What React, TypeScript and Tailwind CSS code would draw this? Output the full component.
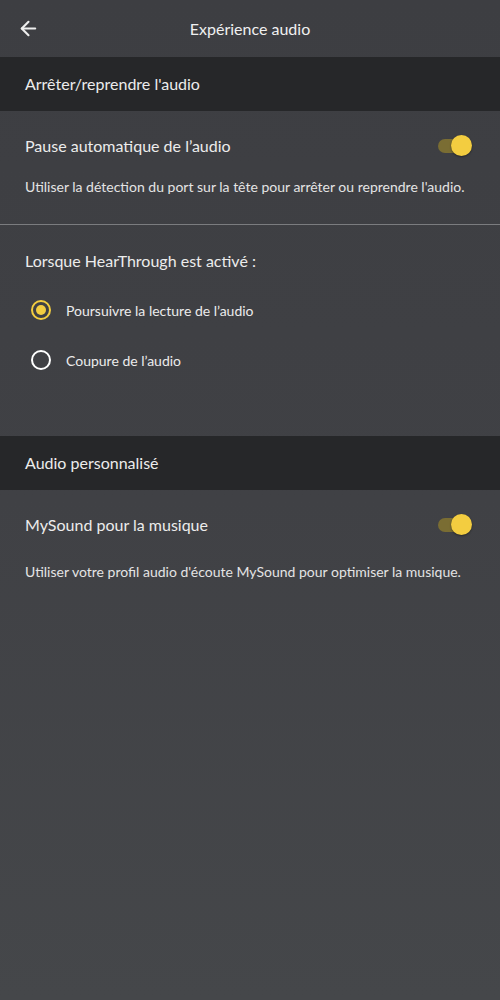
import { ArrowLeft } from 'lucide-react';

function Toggle() {
  return (
    <div className="relative w-[34px] h-[22px] flex items-center shrink-0">
      <div className="w-[32px] h-[14px] rounded-full bg-[#7a6d33]" />
      <div className="absolute right-0 top-0 w-[21px] h-[21px] rounded-full bg-[#f3cd40] shadow-[0_1px_2px_rgba(0,0,0,0.4)]" />
    </div>
  );
}

function Radio({ checked, label }: { checked?: boolean; label: string }) {
  return (
    <div className="flex items-center h-[50px] pl-[31px]">
      <div
        className={`w-[20px] h-[20px] rounded-full border-2 flex items-center justify-center ${
          checked ? 'border-[#f3cd40]' : 'border-white'
        }`}
      >
        {checked && <div className="w-[10px] h-[10px] rounded-full bg-[#f3cd40]" />}
      </div>
      <span className="ml-[15px] text-[14px] text-[#ececec]">{label}</span>
    </div>
  );
}

export default function App() {
  return (
    <div
      className="w-[500px] h-[1000px] bg-gradient-to-b from-[#3d3e42] via-[#404145] to-[#45474a] text-white overflow-hidden"
      style={{ fontFamily: 'Lato, "Open Sans", sans-serif' }}
    >
      {/* Top bar */}
      <div className="relative h-[57px] flex items-center justify-center">
        <ArrowLeft className="absolute left-[17px] top-[17px] w-[23px] h-[23px] text-[#eeeeee]" strokeWidth={2.2} />
        <span className="text-[16px] text-[#f0f0f0]">Expérience audio</span>
      </div>

      {/* Section 1 */}
      <div className="h-[54px] bg-[#262729] flex items-center px-[25px]">
        <span className="text-[16px] text-[#ececec]">Arrêter/reprendre l'audio</span>
      </div>

      <div className="pl-[25px] pr-[28px]">
        <div className="h-[70px] flex items-center justify-between">
          <span className="text-[16px] text-[#ececec]">Pause automatique de l’audio</span>
          <Toggle />
        </div>
        <p className="text-[14px] text-[#e4e4e4] leading-[20px] -mt-[4px] pb-[27px]">
          Utiliser la détection du port sur la tête pour arrêter ou reprendre l'audio.
        </p>
      </div>

      <div className="h-px bg-[#7b7c7f]" />

      <div className="px-[25px] pt-[24px]">
        <span className="text-[16px] text-[#ececec]">Lorsque HearThrough est activé :</span>
      </div>
      <div className="pt-[12px] pb-[51px]">
        <Radio checked label="Poursuivre la lecture de l’audio" />
        <Radio label="Coupure de l’audio" />
      </div>

      {/* Section 2 */}
      <div className="h-[54px] bg-[#262729] flex items-center px-[25px]">
        <span className="text-[16px] text-[#ececec]">Audio personnalisé</span>
      </div>

      <div className="pl-[25px] pr-[28px]">
        <div className="h-[70px] flex items-center justify-between">
          <span className="text-[16px] text-[#ececec]">MySound pour la musique</span>
          <Toggle />
        </div>
        <p className="text-[14px] text-[#e4e4e4] leading-[20px] mt-[2px]">
          Utiliser votre profil audio d'écoute MySound pour optimiser la musique.
        </p>
      </div>
    </div>
  );
}
